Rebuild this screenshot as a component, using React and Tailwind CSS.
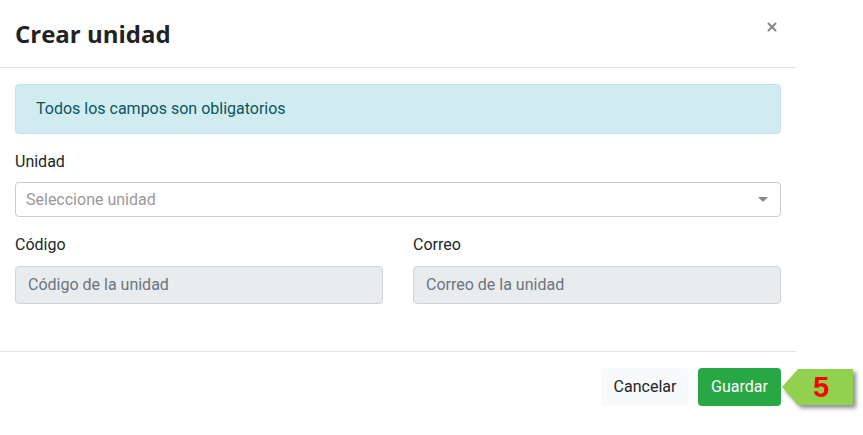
import { X } from 'lucide-react';

function Callout({ n }) {
  return (
    <div className="relative h-[36px] w-[71px] drop-shadow-[3px_3px_2px_rgba(0,0,0,0.45)]">
      <svg width="71" height="36" viewBox="0 0 71 36" className="absolute inset-0">
        <polygon points="0,18 16,0 71,0 71,36 16,36" fill="#92d050" />
      </svg>
      <span className="absolute left-[31px] top-[1px] text-[29px] leading-[34px] font-bold text-[#ff0000] font-['Liberation_Sans',Arial,sans-serif]">
        {n}
      </span>
    </div>
  );
}

export default function App() {
  return (
    <div className="w-[863px] h-[435px] bg-white overflow-hidden font-['Roboto',sans-serif] text-[#212529]">
      <div className="w-[796px]">
        <div className="flex items-start justify-between h-[68px] border-b border-[#e5e5e5] pl-[15px] pr-[17px]">
          <h1 className="mt-[17px] text-[24px] leading-[34px] font-bold text-[#222] font-['Open_Sans',sans-serif]">
            Crear unidad
          </h1>
          <button className="mt-[20px] text-[#888]">
            <X size={14} strokeWidth={3.5} />
          </button>
        </div>

        <div className="px-[15px] pt-[16px]">
          <div className="h-[50px] flex items-center px-[20px] bg-[#d1ecf1] border border-[#bee5eb] rounded-[4px] text-[16px] text-[#0c5460] w-[766px]">
            Todos los campos son obligatorios
          </div>

          <div className="mt-[16px] text-[16px] leading-[24px]">Unidad</div>
          <div className="mt-[8px] h-[35px] w-[766px] flex items-center justify-between border border-[#cccccc] rounded-[4px] pl-[10px] pr-[12px]">
            <span className="text-[16px] text-[#999]">Seleccione unidad</span>
            <svg width="10" height="6" viewBox="0 0 10 6">
              <polygon points="0,0 10,0 5,5" fill="#888" />
            </svg>
          </div>

          <div className="mt-[16px] grid grid-cols-2 gap-x-[30px] w-[766px]">
            <div>
              <div className="text-[16px] leading-[24px]">Código</div>
              <div className="mt-[9px] h-[38px] flex items-center bg-[#e9ecef] border border-[#ced4da] rounded-[4px] px-[12px] text-[16px] text-[#6c757d]">
                Código de la unidad
              </div>
            </div>
            <div>
              <div className="text-[16px] leading-[24px]">Correo</div>
              <div className="mt-[9px] h-[38px] flex items-center bg-[#e9ecef] border border-[#ced4da] rounded-[4px] px-[12px] text-[16px] text-[#6c757d]">
                Correo de la unidad
              </div>
            </div>
          </div>
        </div>

        <div className="mt-[47px] border-t border-[#e5e5e5]" />
      </div>

      <div className="flex items-center w-[863px] mt-[16px] pl-[601px]">
        <button className="h-[38px] w-[88px] rounded-[4px] bg-[#f8f9fa] text-[16px] text-[#212529]">
          Cancelar
        </button>
        <button className="ml-[9px] h-[38px] w-[83px] rounded-[4px] bg-[#28a745] text-[16px] text-white">
          Guardar
        </button>
        <div className="ml-[1px]">
          <Callout n="5" />
        </div>
      </div>
    </div>
  );
}
